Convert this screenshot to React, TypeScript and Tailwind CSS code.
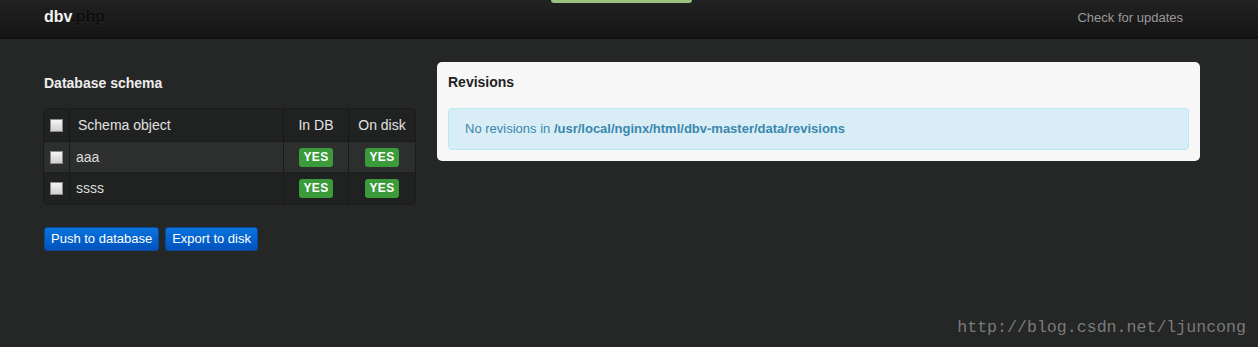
import React from 'react';

const rows = ['aaa', 'ssss'];

function Check() {
  return (
    <span className="inline-block w-[13px] h-[13px] border border-[#8a8a8a] bg-gradient-to-b from-[#f4f4f4] to-[#d0d0d0] align-middle" />
  );
}

function Yes() {
  return (
    <span className="inline-block px-[5px] h-[19px] leading-[19px] rounded-[3px] bg-[#3b9b3b] text-white text-[12px] font-bold tracking-[0.3px]">
      YES
    </span>
  );
}

export default function App() {
  return (
    <div className="min-h-[347px] bg-[#252626] text-[13px] font-['Liberation_Sans',Arial,sans-serif] relative">
      {/* Top bar */}
      <div className="h-[39px] bg-gradient-to-b from-[#222222] to-[#141414] border-b border-[#0e0e0e] relative">
        <div className="absolute left-[551px] top-0 w-[141px] h-[3px] bg-[#9bc27c] rounded-b-[3px]" />
        <div className="flex items-center justify-between h-full pl-[44px] pr-[75px]">
          <div className="text-[16px] font-bold leading-none pb-[4px]">
            <span className="text-[#f2f2f2]">dbv</span>
            <span className="text-[#0e0e0e] [text-shadow:0_1px_0_#2c2c2c]">.php</span>
          </div>
          <div className="text-[#9a9a9a] text-[13px] pb-[3px]">Check for updates</div>
        </div>
      </div>

      <div className="flex gap-[22px] pl-[44px] pt-[24px]">
        {/* Left column */}
        <div className="w-[371px]">
          <h2 className="text-[#eeeeee] text-[14px] font-bold h-[40px] leading-[40px]">Database schema</h2>
          <div className="mt-[6px] rounded-[4px] overflow-hidden bg-[#202121] shadow-[0_0_0_1px_#1c1c1c]">
            <div className="flex h-[33px] items-center text-[#e2e2e2] text-[14px] border-b border-[#1a1a1a]">
              <div className="w-[25px] flex justify-center"><Check /></div>
              <div className="w-[214px] h-full flex items-center pl-[8px] border-l border-[#181818]">Schema object</div>
              <div className="w-[65px] h-full flex items-center justify-center border-l border-[#181818]">In DB</div>
              <div className="flex-1 h-full flex items-center justify-center border-l border-[#181818]">On disk</div>
            </div>
            {rows.map((r, i) => (
              <div
                key={r}
                className={`flex h-[31px] items-center text-[#dddddd] ${i === 0 ? 'bg-[#2d2e2e] border-b border-[#1d1d1d]' : 'bg-[#202121]'}`}
              >
                <div className="w-[25px] flex justify-center"><Check /></div>
                <div className="w-[214px] h-full flex items-center pl-[6px] border-l border-[#1a1a1a] text-[14px]">{r}</div>
                <div className="w-[65px] h-full flex items-center justify-center border-l border-[#1a1a1a]"><Yes /></div>
                <div className="flex-1 h-full flex items-center justify-center border-l border-[#1a1a1a]"><Yes /></div>
              </div>
            ))}
          </div>
          <div className="flex gap-[6px] mt-[23px]">
            <button className="h-[24px] px-[6px] rounded-[3px] bg-gradient-to-b from-[#0b74de] to-[#0152bd] text-white text-[13px] border border-[#0a4a9a]">
              Push to database
            </button>
            <button className="h-[24px] px-[6px] rounded-[3px] bg-gradient-to-b from-[#0b74de] to-[#0152bd] text-white text-[13px] border border-[#0a4a9a]">
              Export to disk
            </button>
          </div>
        </div>

        {/* Revisions */}
        <div className="w-[763px] self-start mt-[-1px] bg-[#f7f7f7] rounded-[5px] px-[11px] pb-[11px]">
          <h2 className="text-[#222222] text-[14px] font-bold h-[40px] leading-[40px]">Revisions</h2>
          <div className="mt-[6px] h-[42px] flex items-center px-[16px] bg-[#d9edf7] border border-[#bce8f1] rounded-[4px] text-[#3a87ad] text-[13px]">
            <span>No revisions in&nbsp;</span>
            <span className="font-bold">/usr/local/nginx/html/dbv-master/data/revisions</span>
          </div>
        </div>
      </div>

      <div className="absolute right-[12px] top-[316px] text-[#7a7a7a] text-[16.6px] font-['Liberation_Mono',monospace]">
        http://blog.csdn.net/ljuncong
      </div>
    </div>
  );
}
